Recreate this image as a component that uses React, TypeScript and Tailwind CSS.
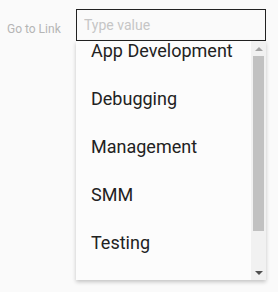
const options = ["App Development", "Debugging", "Management", "SMM", "Testing"];

export default function App() {
  return (
    <div className="h-[292px] w-[278px] overflow-hidden bg-[#fafafa] pl-[7px] pt-[9px] font-['Roboto',sans-serif]">
      <div className="flex items-start">
        <label className="mt-[12px] w-[69px] text-[12px] leading-[16px] text-[#b5b5b5]">Go to Link</label>
        <div className="w-[190px]">
          <input
            readOnly
            placeholder="Type value"
            className="block h-[32px] w-full border border-[#222] bg-transparent px-[7px] text-[14px] leading-[20px] text-[#222] outline-none placeholder:text-[#c6c6c6]"
          />
          <div className="relative flex h-[239px] overflow-hidden bg-[#fcfcfc] shadow-[0_2px_4px_rgba(0,0,0,0.22)]">
            <ul className="-mt-[2px] flex-1 pl-[15px]">
              {options.map((o) => (
                <li key={o} className="h-[48px] text-[18px] leading-[24px] text-[#222]">
                  {o}
                </li>
              ))}
            </ul>
            {/* scrollbar */}
            <div className="flex w-[15px] flex-col items-center bg-[#f1f1f1]">
              <div className="flex h-[15px] items-center justify-center">
                <div className="h-0 w-0 border-x-[4px] border-b-[4px] border-x-transparent border-b-[#a3a3a3]" />
              </div>
              <div className="h-[175px] w-[11px] bg-[#c1c1c1]" />
              <div className="flex-1" />
              <div className="flex h-[15px] items-center justify-center">
                <div className="h-0 w-0 border-x-[4px] border-t-[4px] border-x-transparent border-t-[#505050]" />
              </div>
            </div>
          </div>
        </div>
      </div>
    </div>
  );
}
